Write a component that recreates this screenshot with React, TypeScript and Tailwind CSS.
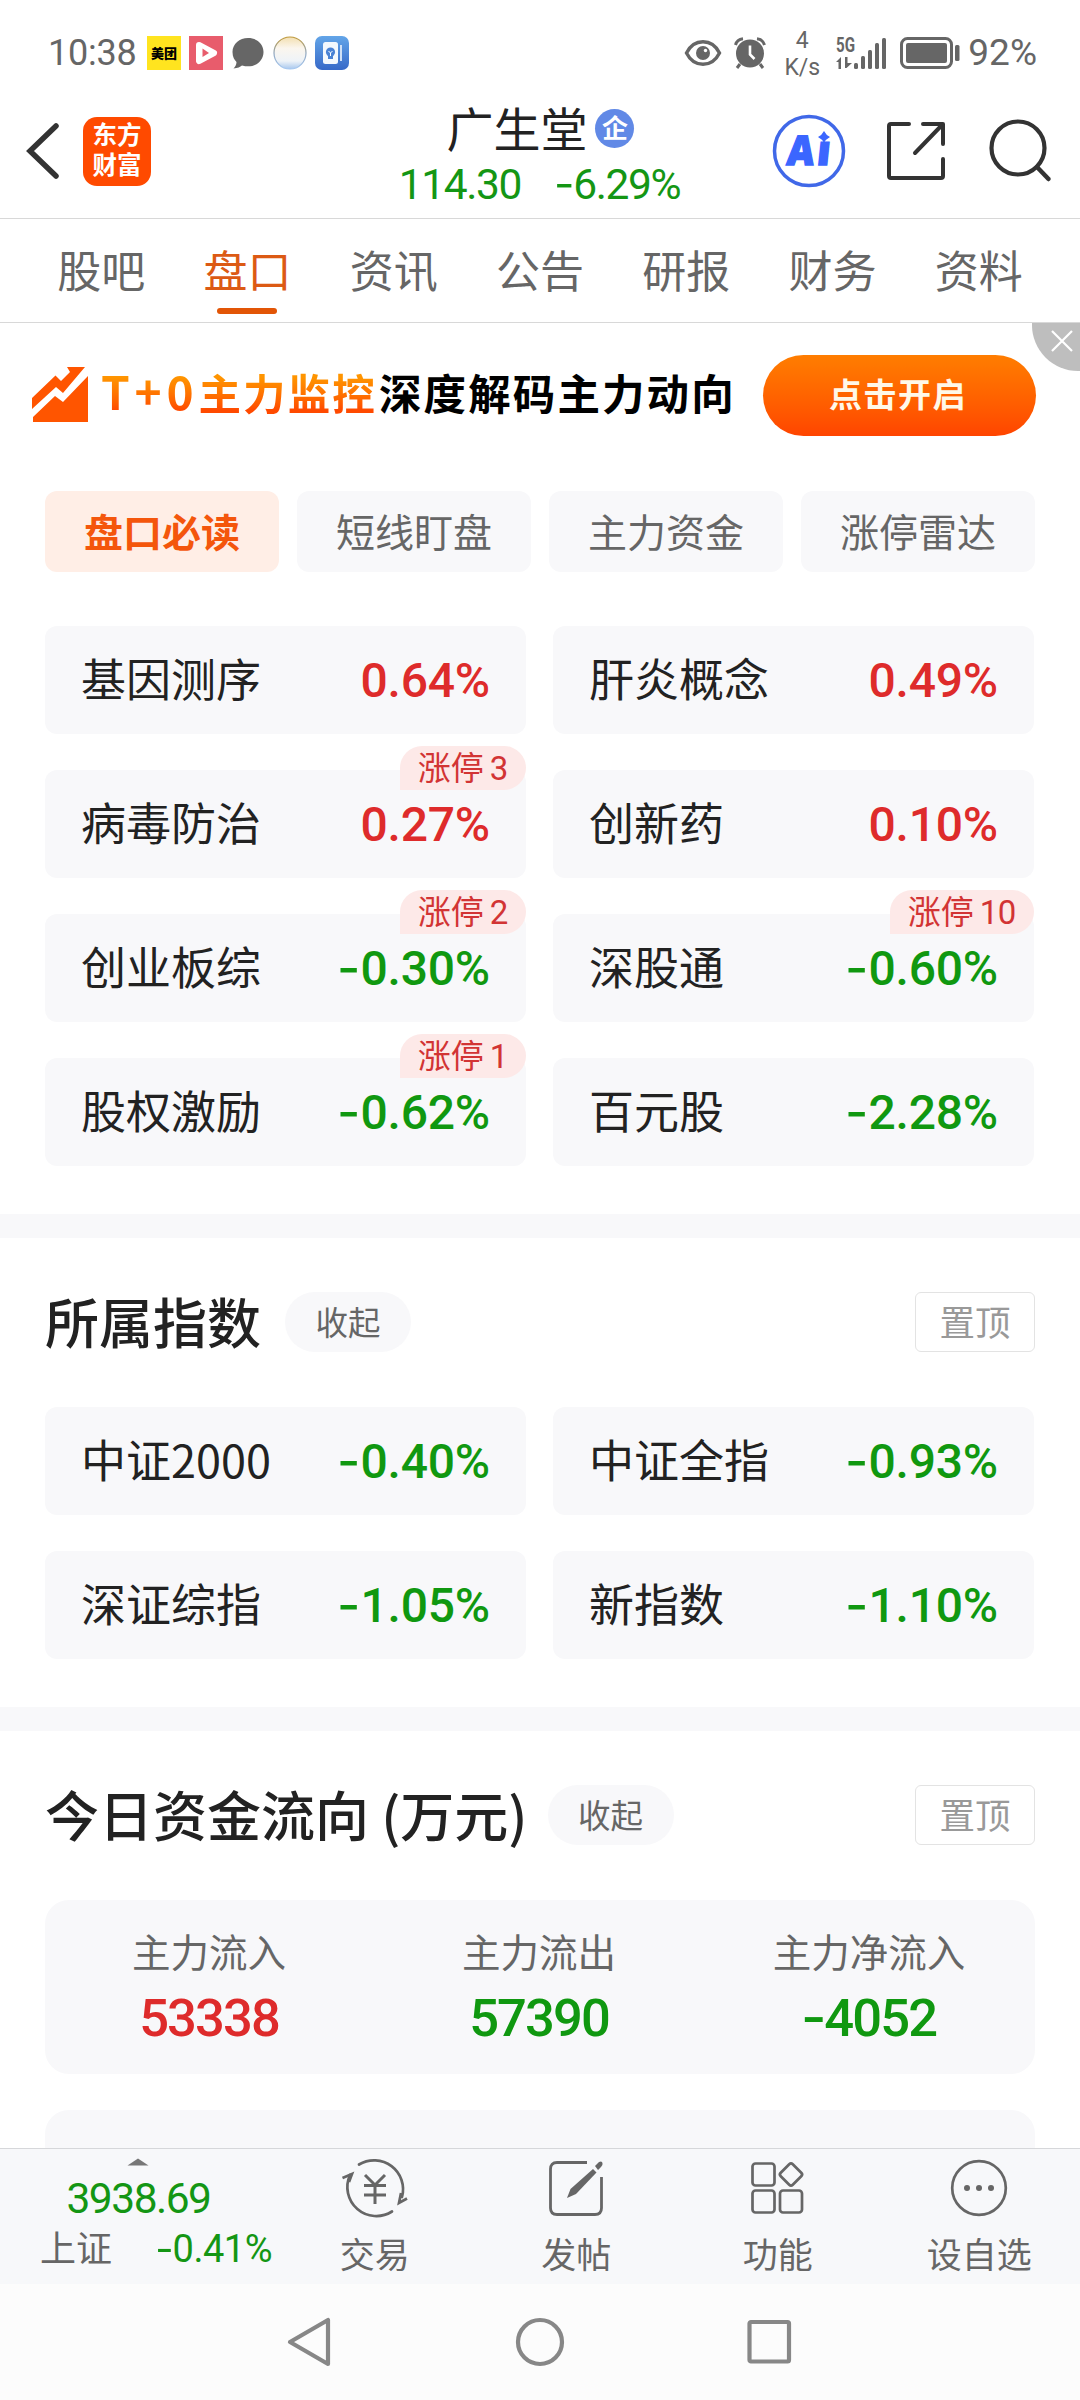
import React from "react";
import clsx from "clsx";

type Quote = {
  name: string;
  value: string;
  tag?: string;
};

const tabs = ["股吧", "盘口", "资讯", "公告", "研报", "财务", "资料"];
const filters = ["盘口必读", "短线盯盘", "主力资金", "涨停雷达"];

const sectors: Quote[] = [
  { name: "基因测序", value: "0.64%" },
  { name: "肝炎概念", value: "0.49%" },
  { name: "病毒防治", value: "0.27%", tag: "3" },
  { name: "创新药", value: "0.10%" },
  { name: "创业板综", value: "-0.30%", tag: "2" },
  { name: "深股通", value: "-0.60%", tag: "10" },
  { name: "股权激励", value: "-0.62%", tag: "1" },
  { name: "百元股", value: "-2.28%" },
];

const indexes: Quote[] = [
  { name: "中证2000", value: "-0.40%" },
  { name: "中证全指", value: "-0.93%" },
  { name: "深证综指", value: "-1.05%" },
  { name: "新指数", value: "-1.10%" },
];

const flows = [
  { name: "主力流入", value: "53338", up: true },
  { name: "主力流出", value: "57390", up: false },
  { name: "主力净流入", value: "-4052", up: false },
];

function Num({ value, className }: { value: string; className?: string }) {
  const negative = value.startsWith("-");
  return (
    <span className={clsx("font-[Roboto,sans-serif] whitespace-nowrap", className)}>
      {negative && <span className="inline-block origin-right scale-x-105 font-[Inter,sans-serif] leading-none">-</span>}
      {negative ? value.slice(1) : value}
    </span>
  );
}

function StatusBar() {
  return (
    <div className="flex h-[84px] shrink-0 items-center justify-between pt-[21px] pr-[43px] pl-[48px] text-[#666]">
      <div className="flex items-center">
        <Num value="10:38" className="w-[99px] text-[36px] leading-none tracking-[-0.2px]" />
        <div className="flex gap-2">
          <div className="flex h-[34px] w-[34px] items-center justify-center bg-[#ffe41f] text-[13px] leading-none font-black text-black">
            美团
          </div>
          <svg width="34" height="34" viewBox="0 0 34 34">
            <rect width="34" height="34" fill="#e85c6c" />
            <path d="M10 9 L25 17 L10 25 Z" fill="#fff" stroke="#fff" strokeWidth="6" strokeLinejoin="round" />
            <path d="M13.5 12.5 L20 17 L13.5 21 Z" fill="#e85c6c" />
          </svg>
          <svg width="34" height="34" viewBox="0 0 34 34">
            <path
              d="M17 2 C8.500 2 1.500 8 1.500 16 C1.500 21 3.500 24 5.500 26 C5.500 29 4 31 2.500 32.500 C7 32 9 31 11 29.500 C24 33 32.500 25 32.500 16 C32.500 8 26 2 17 2 Z"
              fill="#666"
            />
          </svg>
          <svg width="34" height="34" viewBox="0 0 34 34">
            <defs>
              <linearGradient id="orb" x1="0" y1="0" x2="0" y2="1">
                <stop offset="0" stopColor="#f3dfb0" />
                <stop offset="0.35" stopColor="#fbf6ee" />
                <stop offset="0.75" stopColor="#eef3f8" />
                <stop offset="1" stopColor="#a9c8ee" />
              </linearGradient>
              <linearGradient id="orbEdge" x1="0" y1="0" x2="0" y2="1">
                <stop offset="0" stopColor="#c19a3a" />
                <stop offset="0.5" stopColor="#8fa5bd" />
                <stop offset="1" stopColor="#a5c8f2" />
              </linearGradient>
            </defs>
            <circle cx="17" cy="17" r="16" fill="url(#orb)" stroke="url(#orbEdge)" strokeWidth="1.200" />
          </svg>
          <svg width="34" height="34" viewBox="0 0 34 34">
            <defs>
              <linearGradient id="book" x1="0" y1="0" x2="0" y2="1">
                <stop offset="0" stopColor="#63a5e8" />
                <stop offset="1" stopColor="#3769c8" />
              </linearGradient>
            </defs>
            <rect width="34" height="34" rx="7" fill="url(#book)" />
            <rect x="8" y="6" width="15" height="22" rx="2.500" fill="#f4f8fd" />
            <rect x="25" y="9" width="2" height="16" fill="#cfe0f6" />
            <circle cx="15.500" cy="16" r="4.600" fill="#4a82d4" />
            <rect x="13" y="19.500" width="5" height="3.500" fill="#4a82d4" />
            <path d="M13.500 15 L15.500 17 L17.500 15 M15.500 17 V20" stroke="#fff" fill="none" />
          </svg>
        </div>
      </div>

      <div className="flex items-center">
        <svg width="38" height="26" viewBox="0 0 38 26">
          <path d="M2.500 13 C10 -2 28 -2 35.500 13 C28 28 10 28 2.500 13 Z" fill="none" stroke="#666" strokeWidth="3.400" />
          <circle cx="19" cy="13" r="7" fill="#666" />
          <circle cx="21.500" cy="10.500" r="1.700" fill="#fff" />
        </svg>
        <svg className="ml-3" width="32" height="32" viewBox="0 0 32 32">
          <circle cx="16" cy="16.500" r="14" fill="#666" />
          <path d="M1.500 8 Q3 2.500 9 1.800 M30.500 8 Q29 2.500 23 1.800" stroke="#666" strokeWidth="3" fill="none" />
          <path d="M6 27 L3 31 M26 27 L29 31" stroke="#666" strokeWidth="3" />
          <path d="M16 8.500 V17.500 L20.500 22" stroke="#fff" strokeWidth="2.600" fill="none" />
        </svg>
        <div className="ml-[17px] flex w-[38px] flex-col items-center pt-[2px] font-[Roboto,sans-serif] text-[23px] leading-[27px]">
          <span>4</span>
          <span>K/s</span>
        </div>
        <svg className="ml-[15px]" width="52" height="46" viewBox="0 -6 52 46">
          <text x="0" y="15.500" fontFamily="Roboto, sans-serif" fontWeight="700" fontSize="20" textLength="19" lengthAdjust="spacingAndGlyphs" fill="#666">
            5G
          </text>
          <path d="M0 26 L5 21 V33 H2.500 V26 Z M9 21 H11.500 V27 H16 L10.500 32 H9 Z" fill="#666" />
          <g fill="#666">
            <rect x="18" y="27" width="4" height="6" rx="1.500" />
            <rect x="25" y="20" width="4" height="13" rx="1.500" />
            <rect x="32" y="14" width="4" height="19" rx="1.500" />
            <rect x="39" y="7" width="4" height="26" rx="1.500" />
            <rect x="46" y="2" width="4" height="31" rx="1.500" />
          </g>
        </svg>
        <svg className="ml-[12px]" width="62" height="34" viewBox="0 0 62 34">
          <rect x="1.500" y="2.500" width="50" height="29" rx="6" fill="none" stroke="#666" strokeWidth="3" />
          <rect x="6" y="7" width="41" height="20" rx="2" fill="#666" />
          <rect x="55" y="9" width="4.500" height="16" rx="1.500" fill="#666" />
        </svg>
        <Num value="92%" className="ml-[6px] text-[37px] leading-none" />
      </div>
    </div>
  );
}

function Header() {
  return (
    <div className="flex h-[135px] shrink-0 items-center justify-between border-b border-[#d8d8d8] pr-[27px] pl-[26px]">
      <div className="flex w-[330px] items-center gap-[23px]">
        <svg width="34" height="58" viewBox="0 0 34 58">
          <path d="M30 4 L4 29 L30 54" fill="none" stroke="#333" strokeWidth="5.500" strokeLinecap="round" />
        </svg>
        <div className="flex h-[69px] w-[68px] flex-col items-center justify-center rounded-[14px] bg-[#ff4a00] pb-[5px] text-[24.5px] leading-[29.5px] font-bold text-white">
          <span>东方</span>
          <span>财富</span>
        </div>
      </div>

      <div className="flex flex-col items-center pt-[4px]">
        <div className="flex items-center gap-2 pl-[1px]">
          <h1 className="text-[47px] leading-[60px] text-[#222]">广生堂</h1>
          <div className="mt-[4px] mr-[-1px] flex h-[39px] w-[39px] items-center justify-center rounded-full bg-[#6189e6] pb-[3px] text-[26px] leading-none font-bold text-white">
            企
          </div>
        </div>
        <div className="mt-[3px] flex gap-[34px] text-[42.5px] leading-[50px] tracking-[-1.4px] text-[#149614]">
          <Num value="114.30" />
          <Num value="-6.29%" />
        </div>
      </div>

      <div className="flex w-[330px] items-center justify-end">
        <svg width="74" height="74" viewBox="0 0 74 74">
          <circle cx="37" cy="37" r="34.500" fill="none" stroke="#4068e8" strokeWidth="3.500" />
          <g fontFamily="Open Sans, sans-serif" fontWeight="800" fontSize="41" fill="#3b66ff" stroke="#3b66ff" strokeWidth="1.500">
            <text transform="translate(14 51) skewX(-6)" x="0" y="0" textLength="27" lengthAdjust="spacingAndGlyphs">
              A
            </text>
            <text transform="translate(44 51) skewX(-6)" x="0" y="0">
              ı
            </text>
          </g>
          <path d="M52 17 Q54 21 58 23 Q54 25 52 29 Q50 25 46 23 Q50 21 52 17 Z" fill="#3b66ff" />
        </svg>
        <svg className="ml-[39px]" width="62" height="62" viewBox="0 0 62 62">
          <path
            d="M24 4 H6 Q4 4 4 6 V56 Q4 58 6 58 H56 Q58 58 58 56 V39 M38 4 H58 V24 M57 5 L30 33"
            fill="none"
            stroke="#333"
            strokeWidth="4"
            strokeLinecap="round"
            strokeLinejoin="round"
          />
        </svg>
        <svg className="ml-[42px]" width="64" height="64" viewBox="0 0 64 64">
          <circle cx="29" cy="29" r="26.500" fill="none" stroke="#333" strokeWidth="4.200" />
          <path d="M48 48 L59.500 60" stroke="#333" strokeWidth="4.500" strokeLinecap="round" />
        </svg>
      </div>
    </div>
  );
}

function Tabs() {
  return (
    <nav className="grid h-[104px] shrink-0 grid-cols-7 border-b border-[#d8d8d8] px-[28px]">
      {tabs.map((tab, i) => (
        <div key={tab} className="flex flex-col items-center pt-[18px]">
          <span className={clsx("text-[44px] leading-[64px]", i === 1 ? "text-[#dc5a14]" : "text-[#666]")}>{tab}</span>
          {i === 1 && <div className="mt-[7px] h-[6px] w-[60px] rounded-full bg-[#e25506]" />}
        </div>
      ))}
    </nav>
  );
}

function Banner() {
  return (
    <div className="relative flex h-[142px] shrink-0 items-center pl-[31px]">
      <svg width="58" height="58" viewBox="0 0 58 58">
        <path d="M1 33 L24.500 10.500 L30 16 L39 7 L36 2 H54 L32 28 L25 22 L1 44 Z" fill="#ff5500" />
        <path d="M2 52 L24 31 L32 37 L57 11 V57 H2 Z" fill="#ff5500" />
      </svg>
      <div className="ml-[12px] flex pb-[4px] text-[42.5px] leading-[60px] font-bold tracking-[2.1px] whitespace-nowrap">
        <span className="w-[278px] bg-linear-to-b from-[#ff9500] from-25% to-[#ff4a00] to-80% bg-clip-text text-transparent">
          <span className="text-[46px] leading-none tracking-[4.8px]">T+0</span>主力监控
        </span>
        <span className="text-black">深度解码主力动向</span>
      </div>
      <button className="absolute top-[32px] right-[44px] flex h-[81px] w-[273px] items-center justify-center rounded-full bg-linear-to-b from-[#ff7d00] to-[#ff4400] pr-[3px] pb-[4px] text-[33px] font-bold tracking-[1.5px] text-[#fff8e8]">
        点击开启
      </button>
      <div className="absolute top-0 right-0 flex h-[48px] w-[48px] items-center justify-center rounded-bl-[46px] bg-[#bebebe] pb-[13px] pl-[12px]">
        <svg width="22" height="22" viewBox="0 0 22 22" className="shrink-0">
          <path d="M1 1 L21 21 M21 1 L1 21" stroke="#fff" strokeWidth="2.200" />
        </svg>
      </div>
    </div>
  );
}

function QuoteGrid({ items }: { items: Quote[] }) {
  return (
    <div className="mr-px grid grid-cols-2 gap-x-[27px] gap-y-[36px]">
      {items.map((item) => (
        <div key={item.name} className="relative flex h-[108px] items-center justify-between rounded-xl bg-[#f8f8fa] px-[36px]">
          <span className="pb-[5px] text-[45px] leading-none text-[#222]">{item.name}</span>
          <Num
            value={item.value}
            className={clsx(
              "pt-[1px] text-[48px] leading-none font-medium tracking-[-0.2px]",
              item.value.startsWith("-") ? "text-[#109810]" : "text-[#de2b2b]"
            )}
          />
          {item.tag && (
            <div className="absolute top-[-24px] right-0 flex h-[44px] items-center gap-[6px] rounded-t-[22px] rounded-br-[22px] bg-[#fde9e8] px-[18px] text-[33px] leading-none text-[#d23434]">
              <span className="pb-[3px]">涨停</span>
              <Num value={item.tag} className="tracking-[-0.4px]" />
            </div>
          )}
        </div>
      ))}
    </div>
  );
}

function SectionHead({ title }: { title: string }) {
  return (
    <div className="flex h-[60px] items-center">
      <h2
        className={clsx(
          "pb-[2px] text-[54px] leading-none font-medium whitespace-pre text-[#222]",
          // the closing bracket brings its own side bearing
          title.endsWith(")") && "mr-[-4px]"
        )}
      >
        {title}
      </h2>
      <button className="ml-[24px] h-[60px] w-[126px] rounded-full bg-[#f8f8fa] pb-[2px] text-[32.5px] leading-none text-[#666]">
        收起
      </button>
      <button className="ml-auto h-[60px] w-[120px] rounded-md border border-[#e3e3e3] pb-[3px] text-[35.5px] leading-none text-[#999]">
        置顶
      </button>
    </div>
  );
}

function BottomBar() {
  return (
    <div className="flex h-[136px] shrink-0 border-t border-[#d6d7da] bg-[#f7f8fa] text-[#666]">
      <div className="flex w-[274px] flex-col items-center pt-[9px]">
        <svg width="22" height="8" viewBox="0 0 22 8" className="ml-[2px]">
          <path d="M0.500 7.500 L11 0.500 L21.500 7.500 Z" fill="#777" />
        </svg>
        <Num value="3938.69" className="mt-[9px] pl-[3px] text-[42.5px] leading-[48px] tracking-[-1.5px] text-[#149614]" />
        <div className="mt-[5px] flex w-full items-center justify-between pr-[2px] pl-[40px] leading-[36px]">
          <span className="pb-[4px] text-[36px]">上证</span>
          <Num value="-0.41%" className="text-[38px] tracking-[-0.5px] text-[#149614]" />
        </div>
      </div>

      <BarItem label="交易">
        <g fill="none" stroke="#666" strokeWidth="2.700">
          <path d="M18 7.500 A29 29 0 0 1 61 40" strokeLinecap="round" />
          <path d="M51 54.500 A29 29 0 0 1 9 18" strokeLinecap="round" />
          <path d="M1.500 21 L11 17 L8 25 M66 41.500 L58 46 L60 36" />
          <path d="M24 18 L34 28 L44 18 M23 28.500 H45 M23 38 H45 M34 28 V47" strokeWidth="3" />
        </g>
      </BarItem>
      <BarItem label="发帖">
        <path d="M45 5.500 H15 Q8.500 5.500 8.500 12 V51 Q8.500 57.500 15 57.500 H53 Q59.500 57.500 59.500 51 V20" fill="none" stroke="#666" strokeWidth="2.800" />
        <path d="M51 12 L54.500 15.500 L34 37 L25 41 L28.500 32 Z" fill="#666" />
        <path d="M53 9 L57 5 Q60 3.500 60.500 6 Q61 8 59 10 L56 13 Z" fill="#666" />
      </BarItem>
      <BarItem label="功能">
        <g fill="none" stroke="#666" strokeWidth="2.700">
          <rect x="8.500" y="6.500" width="22" height="22" rx="3" />
          <rect x="8.500" y="33.500" width="22" height="22" rx="3" />
          <rect x="36" y="33.500" width="22" height="22" rx="3" />
          <rect x="38.500" y="9" width="17" height="17" rx="2.500" transform="rotate(45 47 17.500)" />
        </g>
      </BarItem>
      <BarItem label="设自选">
        <circle cx="34" cy="31" r="26.800" fill="none" stroke="#666" strokeWidth="2.700" />
        <circle cx="22" cy="31" r="3" fill="#666" />
        <circle cx="34" cy="31" r="3" fill="#666" />
        <circle cx="46" cy="31" r="3" fill="#666" />
      </BarItem>
    </div>
  );
}

function BarItem({ label, children }: { label: string; children: React.ReactNode }) {
  return (
    <div className="flex flex-1 flex-col items-center pt-[8px]">
      <svg width="68" height="62" viewBox="0 0 68 62">
        {children}
      </svg>
      <span className="mt-[14px] text-[35px] leading-[40px]">{label}</span>
    </div>
  );
}

function SystemNav() {
  return (
    <div className="flex h-[116px] shrink-0 items-center justify-center gap-[180px] bg-[#fcfcfc]">
      <svg width="50" height="52" viewBox="0 0 50 52">
        <path d="M5 26 L43 4 V48 Z" fill="none" stroke="#878787" strokeWidth="4.200" strokeLinejoin="round" />
      </svg>
      <svg width="50" height="52" viewBox="0 0 50 52">
        <circle cx="25" cy="26" r="22" fill="none" stroke="#878787" strokeWidth="4.200" />
      </svg>
      <svg width="50" height="52" viewBox="0 0 50 52">
        <rect x="4.500" y="6" width="39.500" height="39.500" rx="1.500" fill="none" stroke="#878787" strokeWidth="4.200" />
      </svg>
    </div>
  );
}

export default function App() {
  return (
    <div className="flex h-[2400px] w-[1080px] flex-col overflow-hidden bg-white font-['Noto_Sans_CJK_SC',sans-serif]">
      <StatusBar />
      <Header />
      <Tabs />

      <main className="flex min-h-0 flex-1 flex-col overflow-hidden">
        <Banner />

        <div className="mt-[26px] grid shrink-0 grid-cols-4 gap-[18px] px-[45px]">
          {filters.map((item, i) => (
            <div
              key={item}
              className={clsx(
                "flex h-[81px] items-center justify-center rounded-xl pb-[3px] text-[39px] leading-none",
                i === 0 ? "bg-[#ffeee6] font-bold text-[#f4560c]" : "bg-[#f8f8fa] text-[#666]"
              )}
            >
              {item}
            </div>
          ))}
        </div>

        <section className="mt-[54px] shrink-0 px-[45px]">
          <QuoteGrid items={sectors} />
        </section>

        <div className="mt-[48px] h-[24px] shrink-0 bg-[#f8f8fa]" />

        <section className="shrink-0 px-[45px] pt-[54px]">
          <SectionHead title="所属指数" />
          <div className="mt-[55px]">
            <QuoteGrid items={indexes} />
          </div>
        </section>

        <div className="mt-[48px] h-[24px] shrink-0 bg-[#f8f8fa]" />

        <section className="shrink-0 px-[45px] pt-[54px]">
          <SectionHead title="今日资金流向 (万元)" />
          <div className="mt-[55px] grid h-[174px] grid-cols-3 rounded-3xl bg-[#f8f8fa]">
            {flows.map((flow) => (
              <div key={flow.name} className="flex flex-col items-center pt-[23px] pr-[2px]">
                <span className="text-[38.5px] leading-[54px] text-[#666]">{flow.name}</span>
                <Num
                  value={flow.value}
                  className={clsx(
                    "mt-[11px] text-[52.5px] leading-[60px] font-medium tracking-[-1.9px]",
                    flow.up ? "text-[#de2b2b]" : "text-[#109810]"
                  )}
                />
              </div>
            ))}
          </div>
          <div className="mt-[36px] h-[174px] rounded-3xl bg-[#f8f8fa]" />
        </section>
      </main>

      <BottomBar />
      <SystemNav />
    </div>
  );
}
